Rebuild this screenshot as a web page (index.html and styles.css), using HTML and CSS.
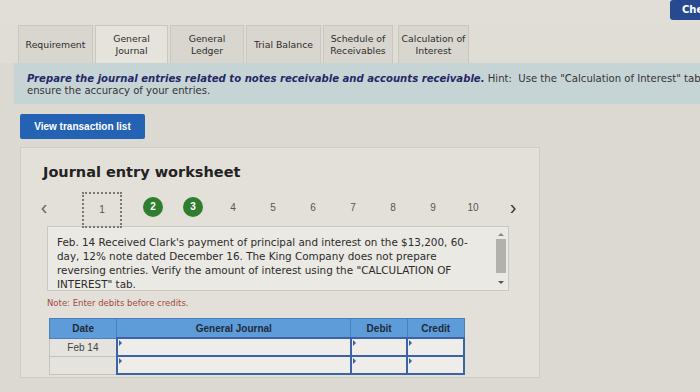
FILE: index.html
```html
<!DOCTYPE html>
<html>
<head>
    <meta charset="UTF-8">
    <title>Journal entry worksheet</title>
    <link rel="stylesheet" href="styles.css">
</head>
<body>
<div class="topbar">
    <a class="check" href="#">Check my work</a>
</div>

<ul class="tabs">
    <li class="tab w75">Requirement</li>
    <li class="tab active w73">General<br>Journal</li>
    <li class="tab w74">General<br>Ledger</li>
    <li class="tab w75">Trial Balance</li>
    <li class="tab w70">Schedule of<br>Receivables</li>
    <li class="tab w71">Calculation of<br>Interest</li>
</ul>

<div class="hint">
    <p><b>Prepare the journal entries related to notes receivable and accounts receivable.</b> Hint:&nbsp; Use the "Calculation of Interest" tab to<br>ensure the accuracy of your entries.</p>
</div>

<button class="view-btn">View transaction list</button>

<div class="panel">
    <h2>Journal entry worksheet</h2>

    <ol class="pager">
        <li class="arrow prev">&lsaquo;</li>
        <li class="page current"><span>1</span></li>
        <li class="page done first-done"><span>2</span></li>
        <li class="page done"><span>3</span></li>
        <li class="page">4</li>
        <li class="page">5</li>
        <li class="page">6</li>
        <li class="page">7</li>
        <li class="page">8</li>
        <li class="page">9</li>
        <li class="page">10</li>
        <li class="arrow next">&rsaquo;</li>
    </ol>

    <div class="desc">
        <p>Feb. 14 Received Clark's payment of principal and interest on the $13,200, 60-day, 12% note dated December 16. The King Company does not prepare reversing entries. Verify the amount of interest using the "CALCULATION OF INTEREST" tab.</p>
        <div class="scroll">
            <span class="up"></span>
            <span class="thumb"></span>
            <span class="down"></span>
        </div>
    </div>

    <p class="note">Note: Enter debits before credits.</p>

    <table class="journal">
        <thead>
        <tr>
            <th class="c-date">Date</th>
            <th class="c-acct">General Journal</th>
            <th class="c-num">Debit</th>
            <th class="c-num">Credit</th>
        </tr>
        </thead>
        <tbody>
        <tr>
            <td class="date">Feb 14</td>
            <td class="field"><i></i></td>
            <td class="field"><i></i></td>
            <td class="field"><i></i></td>
        </tr>
        <tr>
            <td class="date"></td>
            <td class="field"><i></i></td>
            <td class="field"><i></i></td>
            <td class="field"><i></i></td>
        </tr>
        </tbody>
    </table>
</div>
</body>
</html>
```

FILE: styles.css
```css
html,
body {
    margin: 0;
    padding: 0;
}

body {
    width: 700px;
    height: 392px;
    overflow: hidden;
    background: #dcd9d2;
    font-family: "DejaVu Sans", Verdana, sans-serif;
    color: #333;
}

ul,
ol {
    margin: 0;
    padding: 0;
    list-style: none;
}

.topbar {
    height: 25px;
    display: flex;
    justify-content: flex-end;
    background: #e1ded8;
}

.check {
    width: 30px;
    height: 20px;
    overflow: hidden;
    white-space: nowrap;
    box-sizing: border-box;
    padding: 4px 0 0 12px;
    background: #274a8e;
    border-radius: 3px 0 0 3px;
    color: #fff;
    font-size: 10px;
    font-weight: bold;
    text-decoration: none;
}

/* tabs */
.tabs {
    display: flex;
    gap: 2px;
    height: 38px;
    padding-left: 18px;
    background: #e0ddd6;
}

.tab {
    display: flex;
    align-items: center;
    justify-content: center;
    text-align: center;
    box-sizing: border-box;
    height: 38px;
    border: 1px solid #cac7c0;
    border-bottom: none;
    background: #d9d6cf;
    font-size: 9.3px;
    line-height: 12px;
    color: #2d2d2d;
}

.tab.active {
    background: #e6e3dd;
}

.w70 { width: 70px; }
.w71 { width: 71px; margin-left: 3px; }
.w73 { width: 73px; }
.w74 { width: 74px; }
.w75 { width: 75px; }

/* hint band */
.hint {
    margin-left: 14px;
    height: 41px;
    box-sizing: border-box;
    padding: 10px 0 0 13px;
    background: #c7d4d6;
    overflow: hidden;
}

.hint p {
    margin: 0;
    white-space: nowrap;
    font-size: 10.1px;
    line-height: 12px;
    color: #333;
}

.hint b {
    font-style: italic;
    color: #262766;
}

.view-btn {
    display: block;
    margin: 10px 0 0 20px;
    width: 125px;
    height: 25px;
    border: none;
    border-radius: 2px;
    background: #2462b4;
    color: #fff;
    font-family: "Liberation Sans Narrow", "Liberation Sans", Arial, sans-serif;
    font-size: 10px;
    font-weight: bold;
}

/* worksheet panel */
.panel {
    margin: 8px 0 0 20px;
    width: 520px;
    height: 231px;
    box-sizing: border-box;
    border: 1px solid #cfccc5;
    background: #e3e0da;
    padding: 15px 0 0 22px;
}

.panel h2 {
    margin: 0;
    font-size: 14.5px;
    line-height: 19px;
    font-weight: bold;
    color: #222;
}

.pager {
    display: flex;
    align-items: center;
    height: 36px;
    margin: 10px 0 0 -9px;
    font-family: "Liberation Sans", Arial, sans-serif;
    font-size: 10px;
    color: #555;
}

.pager li {
    width: 40px;
    margin-bottom: 6px;
    text-align: center;
}

.pager .prev {
    width: 20px;
    font-size: 20px;
    color: #666;
}

.pager .next {
    font-size: 20px;
    color: #333;
}

.pager .current {
    margin: 0 0 0 28px;
    height: 36px;
    line-height: 32px;
    box-sizing: border-box;
    border: 2px dotted #777;
    position: relative;
    z-index: 1;
}

.pager .first-done {
    margin-left: 11px;
}

.pager .done span {
    display: inline-block;
    width: 20px;
    height: 20px;
    line-height: 20px;
    border-radius: 50%;
    background: #2f7d2e;
    color: #fff;
    font-weight: bold;
}

.desc {
    position: relative;
    margin: -2px 0 0 4px;
    width: 462px;
    height: 65px;
    box-sizing: border-box;
    border: 1px solid #cbc8c1;
    background: #ebe9e4;
    padding: 8px 0 0 9px;
}

.desc p {
    margin: 0;
    width: 412px;
    font-size: 10.4px;
    line-height: 14px;
    color: #2b2b2b;
}

.scroll {
    position: absolute;
    right: 1px;
    top: 1px;
    bottom: 1px;
    width: 12px;
    display: flex;
    flex-direction: column;
    align-items: center;
}

.scroll .up,
.scroll .down {
    width: 0;
    height: 0;
    border-left: 3px solid transparent;
    border-right: 3px solid transparent;
}

.scroll .up {
    margin-top: 5px;
    border-bottom: 3px solid #888;
}

.scroll .down {
    margin-top: auto;
    margin-bottom: 5px;
    border-top: 3px solid #555;
}

.scroll .thumb {
    margin-top: 3px;
    width: 10px;
    height: 34px;
    background: #b3b1ac;
}

.note {
    margin: 7px 0 0 4px;
    font-size: 8.5px;
    line-height: 10px;
    color: #a24a3e;
}

/* journal table */
.journal {
    margin: 10px 0 0 6px;
    width: 416px;
    border-collapse: collapse;
    font-family: "Liberation Sans", Arial, sans-serif;
    font-size: 10px;
}

.journal th {
    height: 18px;
    padding: 0;
    background: #5d9bd9;
    border: 1px solid #4a7fbf;
    color: #1f2a3a;
    font-weight: bold;
}

.c-date { width: 67px; }
.c-acct { width: 236px; }
.c-num { width: 56px; }

.journal td {
    height: 16px;
    padding: 0;
}

.journal .date {
    background: #e5e3de;
    border: 1px solid #c4c2bd;
    text-align: center;
    color: #444;
}

.journal .field {
    position: relative;
    background: #eeede9;
    border: 2px solid #3c63a6;
}

.journal .field i {
    position: absolute;
    left: 1px;
    top: 1px;
    width: 0;
    height: 0;
    border-top: 3px solid transparent;
    border-bottom: 3px solid transparent;
    border-left: 3px solid #3c63a6;
}
```
